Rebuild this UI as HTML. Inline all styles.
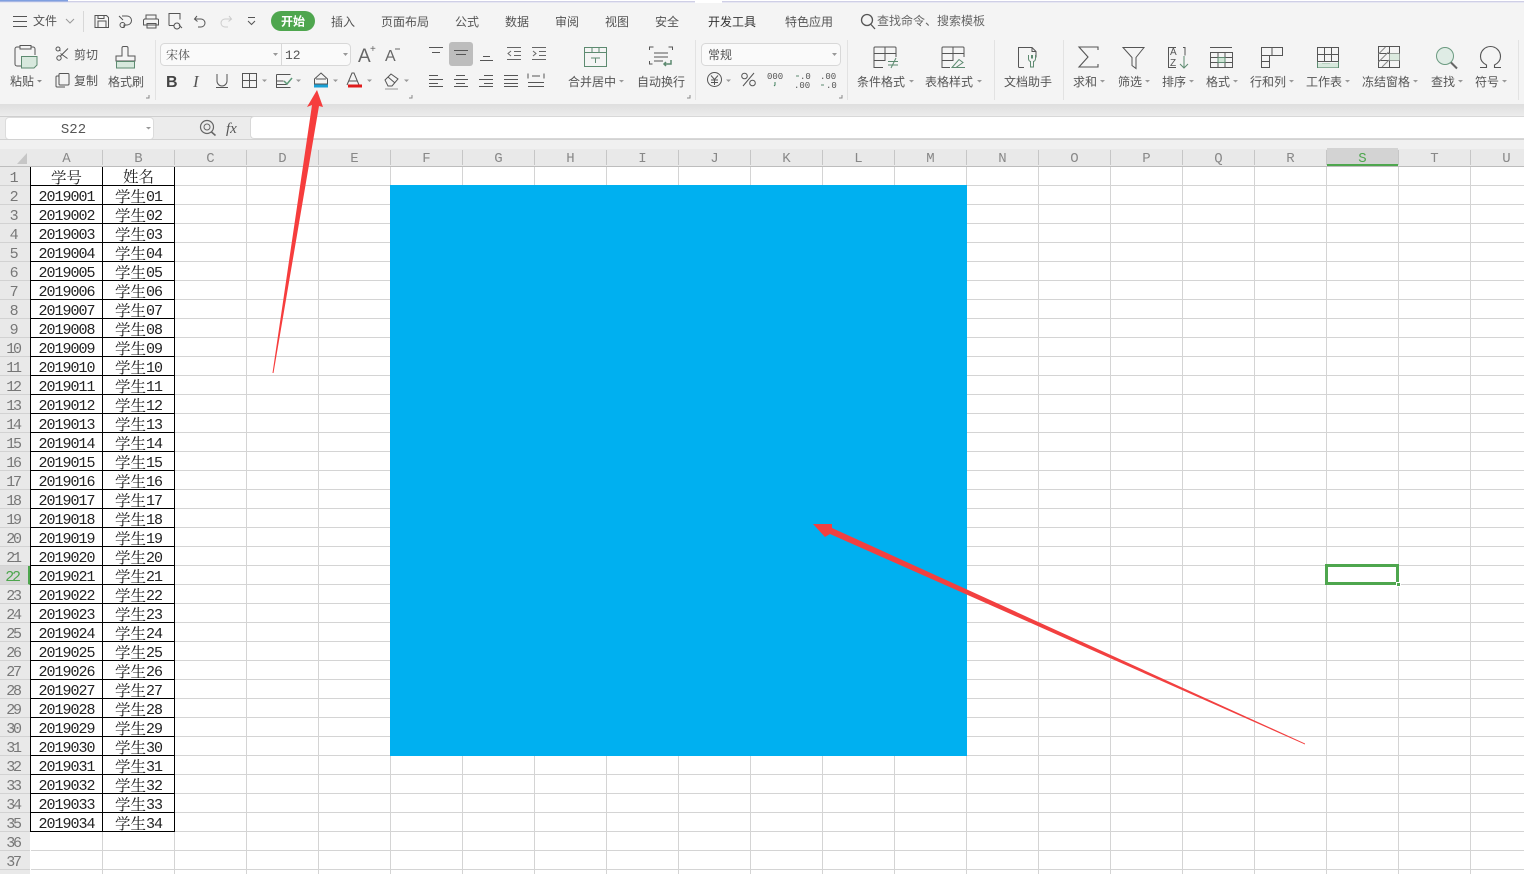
<!DOCTYPE html>
<html lang="zh"><head><meta charset="utf-8"><title>WPS 表格</title>
<style>
html,body{margin:0;padding:0;background:#fff}
body{width:1524px;height:874px;overflow:hidden;position:relative;font-family:"Liberation Sans","Noto Sans CJK SC",sans-serif}
.abs{position:absolute}
#rib{left:0;top:0;width:1524px;height:104px;background:#f4f4f4}
#band{left:0;top:104px;width:1524px;height:12px;background:linear-gradient(#dedede,#ececec)}
#fbar{left:0;top:116px;width:1524px;height:23px;background:#ececec;border-top:1px solid #cfcfcf}
#finput{left:250px;top:116px;width:1274px;height:23px;background:#fff;border-radius:4px 0 0 4px;border:1px solid #d8d8d8;border-right:0;box-sizing:border-box}
#name{left:5px;top:117px;width:149px;height:23px;background:#fff;border-radius:4px;border:1px solid #dcdcdc;box-sizing:border-box;font:14px "Liberation Mono",monospace;color:#555;text-align:center;line-height:24px;padding-right:12px}
#gap{left:0;top:139px;width:1524px;height:28px;background:linear-gradient(#f0f0f0 0,#f0f0f0 9px,#e9e9e9 9px);border-top:1px solid #d2d2d2;box-sizing:border-box;border-bottom:1px solid #bdbdbd}
#grid{left:31px;top:167px;width:1493px;height:707px;background-image:repeating-linear-gradient(90deg,transparent 0,transparent 71px,#d4d4d4 71px,#d4d4d4 72px),repeating-linear-gradient(180deg,transparent 0,transparent 18px,#d4d4d4 18px,#d4d4d4 19px);background-color:#fff}
#side{left:0;top:167px;width:30px;height:707px;background:#e9e9e9}
#blue{left:390px;top:185px;width:577px;height:571px;background:#00b0f0}
#sel{left:1325px;top:564px;width:74px;height:21px;border:3px solid #4ea64e;box-sizing:border-box}
#hnd{left:1396px;top:582px;width:5px;height:5px;background:#4ea64e;border:1px solid #fff;box-sizing:border-box}
#colS{left:1327px;top:148px;width:71px;height:18px;background:#d3d3d3;border-bottom:2px solid #4ea64e;box-sizing:border-box}
#heads span{position:absolute;top:150px;width:72px;text-align:center;font:14px/19px "Liberation Mono",monospace;color:#888;border-right:1px solid #c6c6c6;box-sizing:border-box;height:15px}
#tbl{left:0;top:167px}
#tbl p{display:flex;height:19px;margin:0}
#tbl span{display:block;height:19px;box-sizing:border-box;text-align:center;white-space:nowrap;overflow:hidden}
#tbl span:nth-child(1){width:30px;padding:3px 4px 0 0;font:15px/17px "Liberation Mono",monospace;letter-spacing:-2.300px;color:#777;border-bottom:1px solid #d2d2d2}
#tbl span:nth-child(2){width:73px;padding-top:3px;border:1px solid #000;border-width:0 1px 1px 1px;font:15px/17px "Liberation Mono",monospace;letter-spacing:-1px;color:#222}
#tbl span:nth-child(3){width:72px;padding-top:1px;border:1px solid #000;border-width:0 1px 1px 0;font:15px/19px "Liberation Mono","Noto Serif CJK SC",monospace;letter-spacing:-1px;color:#222}
#tbl span em{font:normal 15.5px/17px "Noto Serif CJK SC",serif;letter-spacing:0;position:relative;top:1px}
#tbl p.h span:nth-child(2) em{top:-1px;display:inline-block}
#tbl p.h span:nth-child(3) em{top:0}
#tbl p.n span:nth-child(2),#tbl p.n span:nth-child(3){display:none}
#tbl p.g span:nth-child(1){color:#4ea64e;background:#d8d8d8;border-right:2px solid #4ea64e}
svg text{font-family:"Noto Sans CJK SC","WenQuanYi Zen Hei",sans-serif;font-size:12px;fill:#555}
</style></head><body>
<div id="rib" class="abs"></div><div id="band" class="abs"></div><div id="fbar" class="abs"></div>
<div id="finput" class="abs"></div><div id="name" class="abs">S22</div>
<div id="gap" class="abs"></div><div id="grid" class="abs"></div><div id="side" class="abs"></div>
<div id="colS" class="abs"></div>
<div id="heads">
<span style="left:31px">A</span><span style="left:103px">B</span><span style="left:175px">C</span><span style="left:247px">D</span><span style="left:319px">E</span><span style="left:391px">F</span><span style="left:463px">G</span><span style="left:535px">H</span><span style="left:607px">I</span><span style="left:679px">J</span><span style="left:751px">K</span><span style="left:823px">L</span><span style="left:895px">M</span><span style="left:967px">N</span><span style="left:1039px">O</span><span style="left:1111px">P</span><span style="left:1183px">Q</span><span style="left:1255px">R</span><span style="left:1327px;color:#4ea64e">S</span><span style="left:1399px">T</span><span style="left:1471px">U</span>
</div>
<div id="blue" class="abs"></div>
<div id="tbl" class="abs">
<p class="h"><span>1</span><span><em>学号</em></span><span><em>姓名</em></span></p>
<p><span>2</span><span>2019001</span><span><em>学生</em>01</span></p>
<p><span>3</span><span>2019002</span><span><em>学生</em>02</span></p>
<p><span>4</span><span>2019003</span><span><em>学生</em>03</span></p>
<p><span>5</span><span>2019004</span><span><em>学生</em>04</span></p>
<p><span>6</span><span>2019005</span><span><em>学生</em>05</span></p>
<p><span>7</span><span>2019006</span><span><em>学生</em>06</span></p>
<p><span>8</span><span>2019007</span><span><em>学生</em>07</span></p>
<p><span>9</span><span>2019008</span><span><em>学生</em>08</span></p>
<p><span>10</span><span>2019009</span><span><em>学生</em>09</span></p>
<p><span>11</span><span>2019010</span><span><em>学生</em>10</span></p>
<p><span>12</span><span>2019011</span><span><em>学生</em>11</span></p>
<p><span>13</span><span>2019012</span><span><em>学生</em>12</span></p>
<p><span>14</span><span>2019013</span><span><em>学生</em>13</span></p>
<p><span>15</span><span>2019014</span><span><em>学生</em>14</span></p>
<p><span>16</span><span>2019015</span><span><em>学生</em>15</span></p>
<p><span>17</span><span>2019016</span><span><em>学生</em>16</span></p>
<p><span>18</span><span>2019017</span><span><em>学生</em>17</span></p>
<p><span>19</span><span>2019018</span><span><em>学生</em>18</span></p>
<p><span>20</span><span>2019019</span><span><em>学生</em>19</span></p>
<p><span>21</span><span>2019020</span><span><em>学生</em>20</span></p>
<p class="g"><span>22</span><span>2019021</span><span><em>学生</em>21</span></p>
<p><span>23</span><span>2019022</span><span><em>学生</em>22</span></p>
<p><span>24</span><span>2019023</span><span><em>学生</em>23</span></p>
<p><span>25</span><span>2019024</span><span><em>学生</em>24</span></p>
<p><span>26</span><span>2019025</span><span><em>学生</em>25</span></p>
<p><span>27</span><span>2019026</span><span><em>学生</em>26</span></p>
<p><span>28</span><span>2019027</span><span><em>学生</em>27</span></p>
<p><span>29</span><span>2019028</span><span><em>学生</em>28</span></p>
<p><span>30</span><span>2019029</span><span><em>学生</em>29</span></p>
<p><span>31</span><span>2019030</span><span><em>学生</em>30</span></p>
<p><span>32</span><span>2019031</span><span><em>学生</em>31</span></p>
<p><span>33</span><span>2019032</span><span><em>学生</em>32</span></p>
<p><span>34</span><span>2019033</span><span><em>学生</em>33</span></p>
<p><span>35</span><span>2019034</span><span><em>学生</em>34</span></p>
<p class="n"><span>36</span></p>
<p class="n"><span>37</span></p>
</div>
<div id="sel" class="abs"></div><div id="hnd" class="abs"></div>

<svg class="abs" style="left:0;top:0" width="1524" height="874" viewBox="0 0 1524 874">
<!-- top strip -->
<rect x="0" y="0" width="1524" height="3" fill="#fff"/>
<rect x="0" y="1" width="695" height="1.500" fill="#cfcfe6"/><rect x="722" y="1" width="802" height="1.500" fill="#cfcfe6"/><rect x="0" y="0" width="68" height="1.500" fill="#7f9fe0"/>
<!-- corner -->
<path d="M17 164 L27 153 V164Z" fill="#c6c6c6"/>
<!-- tabs -->
<g fill="none" stroke="#555" stroke-width="1">
<path d="M13 16.500H27M13 21.500H27M13 26.500H27"/>
<path d="M66 19l4 4 4-4" stroke="#999"/>
<path d="M83.500 11V32" stroke="#d8d8d8"/>
<path d="M95 15.500h11.500l2 2V27.500H95zM98 27V21h8v6M98 15.500v3h6v-3"/>
<path d="M122 16h5a4 4 0 0 1 0 9h-3v3M120 25a2.500 2.500 0 1 0 5 0 2.500 2.500 0 1 0-5 0M119 16l4 4"/>
<path d="M146 19v-4h10v4M144.500 19h13a1 1 0 0 1 1 1v5h-15v-5zM147 23.500h9v4.500h-9z"/>
<path d="M169 27.500V15.500h11v6M169 27.500h5M177 25a3 3 0 1 1-.1 0M179 27l3 3" transform="translate(0 -2)"/>
<path d="M197 16l-2.500 3 3 2.500M195 19h6a3.500 3.500 0 0 1 0 8h-3"/>
<path d="M229 16l2.500 3-3 2.500M231 19h-6a3.500 3.500 0 0 0 0 8h3" stroke="#ccc"/>
<path d="M248 17.500h7M248 21l3.500 3.500 3.500-3.500"/>
<circle cx="867" cy="20" r="5.500" stroke-width="1.300"/><path d="M871 24.500l4 4.500" stroke-width="1.300"/>
</g>
<rect x="271" y="11" width="44" height="20" rx="10" fill="#4ea64e"/>
<text x="281" y="25.500" style="fill:#fff;font-weight:700">开始</text>
<text x="33" y="25">文件</text>
<text x="331" y="26">插入</text><text x="381" y="26">页面布局</text><text x="455" y="26">公式</text><text x="505" y="26">数据</text><text x="555" y="26">审阅</text><text x="605" y="26">视图</text><text x="655" y="26">安全</text>
<text x="708" y="26" style="fill:#333">开发工具</text><text x="785" y="26">特色应用</text>
<text x="877" y="25" style="fill:#666">查找命令、搜索模板</text>

<!-- dividers -->
<g stroke="#e2e2e2"><path d="M155.500 40V100M695.500 40V100M847.500 40V100M994.500 40V100M1063.500 40V100M1518.500 40V100"/></g>
<!-- corner marks -->
<g fill="none" stroke="#888"><path d="M149 95v3h-3M412 95v3h-3M690 95v3h-3M842 95v3h-3"/></g>

<!-- clipboard -->
<g fill="none" stroke="#555">
<path d="M20 47h-3a2 2 0 0 0-2 2v15a2 2 0 0 0 2 2h4M31 47h2a2 2 0 0 1 2 2v6M20 45.500h11v3.500H20z"/>
<path d="M21.500 56.500H37V65l-3 3H21.500z" fill="#d7e8dd" stroke="#5d8a70"/>
<circle cx="59" cy="58" r="2.200"/><path d="M60 56.500l8-8M60.500 51l-1.500-1"/>
<path d="M60.500 53.500l7 5"/><circle cx="58" cy="49" r="2"/>
<path d="M60 73.500h8a1 1 0 0 1 1 1V84a1 1 0 0 1-1 1h-8a1 1 0 0 1-1-1V74.500a1 1 0 0 1 1-1zM59 76h-2a1 1 0 0 0-1 1v9a1 1 0 0 0 1 1h8"/>
<path d="M122 56v-8a1.500 1.500 0 0 1 1.500-1.500h3A1.500 1.500 0 0 1 128 48v8h7v5h-19v-5z"/>
<path d="M116.500 61.500h18V68h-18z" fill="#d7e8dd" stroke="#5d8a70"/>
</g>
<text x="10" y="85.500">粘贴</text><path d="M37 80h5l-2.500 2.500z" fill="#888"/>
<text x="74" y="59">剪切</text><text x="74" y="85">复制</text><text x="108" y="86">格式刷</text>

<!-- font combos -->
<rect x="160.500" y="43.500" width="190" height="22" rx="4" fill="#fafafa" stroke="#d8d8d8"/>
<path d="M281.500 44V65" stroke="#d8d8d8"/>
<text x="166" y="59" style="font-family:'Noto Serif CJK SC',serif">宋体</text>
<text x="285" y="59" style="font-family:'Liberation Mono',monospace;font-size:13px">12</text>
<path d="M273 53h5l-2.500 3zM343 53h5l-2.500 3z" fill="#999"/>
<text x="358" y="62" style="font-family:'Liberation Sans',sans-serif;font-size:19px;fill:#666">A</text>
<text x="370" y="52" style="font-family:'Liberation Sans',sans-serif;font-size:10px;fill:#666">+</text>
<text x="385" y="61" style="font-family:'Liberation Sans',sans-serif;font-size:16px;fill:#666">A</text>
<path d="M395 49h5" stroke="#666"/>
<!-- font row 2 -->
<text x="166" y="87" style="font-family:'Liberation Sans',sans-serif;font-size:16px;font-weight:700;fill:#444">B</text>
<text x="193" y="87" style="font-family:'Liberation Serif',serif;font-size:17px;font-style:italic;fill:#555">I</text>
<g fill="none" stroke="#555">
<path d="M217 74v7a5 5 0 0 0 10 0v-7M216 87.500h12"/>
<path d="M242.500 73.500h14v14h-14zM249.500 73.500v14M242.500 80.500h14"/>
<path d="M276.500 74.500h14M276.500 74.500v13h14M276.500 81h7M276.500 84.500h10" />
<path d="M284 81l3 3 5-6" stroke="#5d9a78" stroke-width="1.500"/>
<path d="M321 73l6.500 6v5h-13v-5zM316 79h10"/>
<path d="M347 85l5-12h2l5 12M349 81h8"/>
<path d="M385 80l6-6 7 5-6 7h-4zM388 77l7 6" stroke="#555"/>
<path d="M385 89h13" stroke="#999"/>
</g>
<rect x="314" y="84.500" width="14" height="3" fill="#1aa1d6"/>
<rect x="348" y="84.500" width="14" height="3" fill="#e01b1b"/>
<path d="M262 79.500h5l-2.500 2.500zM296 79.500h5l-2.500 2.500zM333 79.500h5l-2.500 2.500zM367 79.500h5l-2.500 2.500zM404 79.500h5l-2.500 2.500z" fill="#999"/>

<!-- alignment -->
<rect x="449" y="42" width="24" height="24" rx="3" fill="#bdbdbd"/>
<g fill="none" stroke="#555">
<path d="M429 47.500h14M432 52.500h8M454 50.500h14M456 54.500h10M480 60.500h13M483 56.500h7"/>
<path d="M507 47.500h14M514 51.500h7M514 55.500h7M507 59.500h14M511 51l-3 2.500 3 2.500" stroke="#666"/>
<path d="M532 47.500h14M539 51.500h7M539 55.500h7M532 59.500h14M533 51l3 2.500-3 2.500" stroke="#666"/>
<path d="M429 75.500h9M429 79.500h14M429 83.500h9M429 86.500h14" />
<path d="M456 75.500h9M454 79.500h14M456 83.500h9M454 86.500h14"/>
<path d="M484 75.500h9M479 79.500h14M484 83.500h9M479 86.500h14"/>
<path d="M504 75.500h14M504 79.500h14M504 83.500h14M504 86.500h14"/>
<path d="M528 73.500v5M544 73.500v5M532 76h8M528 82.500h16M528 86.500h16"/>
<!-- merge -->
<path d="M584.500 47.500h22v19h-22zM584.500 52.500h22M592 47.500v5M599 47.500v5M591 58h9M595.500 58v5" stroke="#5d8a70"/>
<path d="M649.500 50v-3h4M672.500 50v-3h-4M649.500 61v3h3M654 53h14M654 57h14M654 61h9" />
<path d="M671 60v4h-7M666 62l-2 2 2 2" stroke="#5d8a70" stroke-width="1.500"/>
</g>
<text x="568" y="86">合并居中</text><path d="M619 80h5l-2.500 2.500z" fill="#999"/>
<text x="637" y="86">自动换行</text>

<!-- number -->
<rect x="701.500" y="43.500" width="139" height="22" rx="4" fill="#fafafa" stroke="#d8d8d8"/>
<text x="708" y="59">常规</text><path d="M832 53h5l-2.500 3z" fill="#999"/>
<g fill="none" stroke="#555"><circle cx="714.500" cy="79.500" r="7"/><path d="M711 75.500l3.500 4 3.500-4M714.500 79.500V85M711 80h7M711 82.500h7"/><path d="M743 86l11-13"/><circle cx="744.500" cy="76" r="2.800"/><circle cx="752.500" cy="83" r="2.800"/><path d="M775 82v3l-1 1" stroke="#3f7f5d"/></g>
<path d="M726 79.500h5l-2.500 2.500z" fill="#999"/>
<text x="767" y="79" style="font-family:'Liberation Mono',monospace;font-size:9px">000</text>
<text x="800" y="79" style="font-family:'Liberation Mono',monospace;font-size:9px">.0</text>
<text x="794" y="88" style="font-family:'Liberation Mono',monospace;font-size:9px">.00</text>
<text x="820" y="79" style="font-family:'Liberation Mono',monospace;font-size:9px">.00</text>
<text x="826" y="88" style="font-family:'Liberation Mono',monospace;font-size:9px">.0</text>
<path d="M799 76h-3M821 85h3" stroke="#5d8a70" fill="none"/>

<!-- right icons -->
<g fill="none" stroke="#555">
<path d="M883 67.500h-9v-19.500a1 1 0 0 1 1-1h20a1 1 0 0 1 1 1V57M874 53.500h22M885 47v14M874 60.500h11"/>
<path d="M888 61.500h10M888 65h10M896 58l-5 10" stroke="#5d8a70"/>
<path d="M950 67.500h-8v-19.500a1 1 0 0 1 1-1h20a1 1 0 0 1 1 1V57M942 53.500h22M953 47v14M942 60.500h11"/>
<path d="M952 67.500l7-8 4 3-7 5zM952 67.500h13" stroke="#5d8a70"/>
<path d="M1024 67.500h-4.500a1 1 0 0 1-1-1V47.500h13.500l4 4v6M1032 47.500v4h4"/>
<path d="M1028.500 55v4a3 3 0 0 0 2 2.500V67h3v-5.500a3 3 0 0 0 2-2.500v-4M1031.500 55v3h1v-3" stroke="#5d8a70"/>
<path d="M1098 50v-3h-19l9 10-9 10h19v-3" stroke-width="1.100"/>
<path d="M1123 47.500h21l-8 10v11l-4-3v-8z"/>
<path d="M1176 47.500h-7.500v20h7.500M1183 47.500h2v8" />
<path d="M1184 56v12M1180 64l4 4 4-4" stroke="#5d8a70"/>
<path d="M1210 47.500h22M1210.500 52.500h22v15h-22zM1210.500 57.500h22M1210.500 62.500h22M1218 52.500v15M1225 52.500v15"/>
<path d="M1261.500 47.500h21v8h-13v12h-8zM1261.500 55.500h8M1261.500 61.500h8M1272 47.500v8"/>
<path d="M1317.500 47.500h21v14h-21zM1317.500 54.500h21M1324.500 47.500v14M1331.500 47.500v14"/>
<path d="M1317.500 61.500v6h21v-6M1322 63.500h8" stroke="#5d8a70"/>
<path d="M1378.500 46.500h21v21h-21zM1378.500 53.500h21M1378.500 60.500h21M1389.500 46.500v21"/>
<path d="M1378.500 54l7-7M1378.500 62l10-10M1382 67l7-7" stroke="#888"/>
<circle cx="1445" cy="56" r="8.500" stroke="#6b9a80" fill="#dfece5"/>
<path d="M1451 62.500l6 6" stroke="#666" stroke-width="2"/>
<path d="M1480 67.500h6.500v-2.500c-4-2-6-5-6-8.500a10 10 0 0 1 20 0c0 3.500-2 6.500-6 8.500v2.500h6.500" stroke-width="1.100"/>
</g>
<path d="M1389.500 53.500h10v7h-10z" fill="#dbeadf"/>
<path d="M1218 57.500h7v5h-7z" fill="#cfe5d6" stroke="#5d8a70"/>
<path d="M1318 63h20v4.500h-20z" fill="#cfe5d6" opacity=".8"/>
<text x="1170" y="55" style="font-family:'Liberation Sans',sans-serif;font-size:10px;fill:#555">A</text>
<text x="1170" y="66" style="font-family:'Liberation Sans',sans-serif;font-size:10px;fill:#555">Z</text>
<text x="857" y="86">条件格式</text><text x="925" y="86">表格样式</text><text x="1004" y="86">文档助手</text><text x="1073" y="86">求和</text><text x="1118" y="86">筛选</text><text x="1162" y="86">排序</text><text x="1206" y="86">格式</text><text x="1250" y="86">行和列</text><text x="1306" y="86">工作表</text><text x="1362" y="86">冻结窗格</text><text x="1431" y="86">查找</text><text x="1475" y="86">符号</text>
<path d="M909 80h5l-2.500 2.500zM977 80h5l-2.500 2.500zM1100 80h5l-2.500 2.500zM1145 80h5l-2.500 2.500zM1189 80h5l-2.500 2.500zM1233 80h5l-2.500 2.500zM1289 80h5l-2.500 2.500zM1345 80h5l-2.500 2.500zM1413 80h5l-2.500 2.500zM1458 80h5l-2.500 2.500zM1502 80h5l-2.500 2.500z" fill="#999"/>

<!-- formula bar icons -->
<g fill="none" stroke="#666"><circle cx="207" cy="127" r="6.500" stroke-width="1.200"/><circle cx="207" cy="127" r="3"/><path d="M211.500 132l4 3.500" stroke-width="1.500"/></g>
<text x="226" y="133" style="font-family:'Liberation Serif',serif;font-style:italic;font-size:15px;fill:#555">fx</text>
<path d="M146 127h5l-2.500 2.500z" fill="#999"/>

<!-- arrows -->
<polygon points="272.500,373 273.500,373 319,106 323,107 317,90 307,107 312,105" fill="#f63d3d"/>
<polygon points="813,524 832,524 832,528 1305,743.500 1305,744.500 830,534 825,537" fill="#f24040"/>
</svg>
</body></html>
